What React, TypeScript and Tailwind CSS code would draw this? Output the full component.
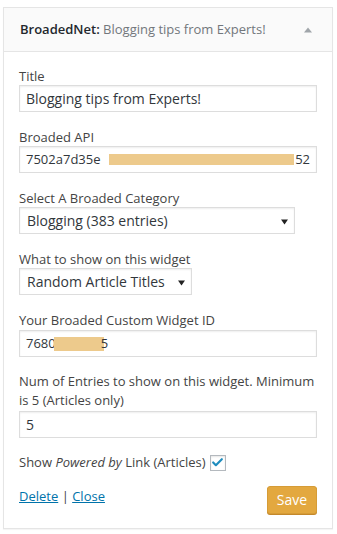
import { Check } from 'lucide-react';

function Field({ label, children }: { label: React.ReactNode; children: React.ReactNode }) {
  return (
    <div className="mt-4 first:mt-0">
      <label className="block text-[13px] leading-[18px] text-[#444]">{label}</label>
      {children}
    </div>
  );
}

function TextBox({ children, size = 'text-[14px]' }: { children: React.ReactNode; size?: string }) {
  return (
    <div
      className={`flex h-[27px] items-center whitespace-nowrap overflow-hidden border border-[#ddd] bg-white px-[6px] text-[#32373c] shadow-[inset_0_1px_2px_rgba(0,0,0,0.07)] ${size}`}
    >
      {children}
    </div>
  );
}

function SelectBox({ value, width }: { value: string; width: string }) {
  return (
    <div
      className={`flex h-[27px] items-center justify-between border border-[#ddd] bg-white pl-[7px] pr-[6px] text-[14px] text-[#32373c] shadow-[inset_0_1px_2px_rgba(0,0,0,0.07)] ${width}`}
    >
      <span>{value}</span>
      <svg width="7" height="7" viewBox="0 0 7 7" className="mt-[1px]">
        <path d="M0 1.5h7L3.5 6.5z" fill="#222" />
      </svg>
    </div>
  );
}

export default function App() {
  return (
    <div className="min-h-[534px] bg-white pt-[7px] pl-[3px] pr-[4px] font-['Open_Sans',sans-serif]">
      <div className="border border-[#e5e5e5] bg-white shadow-[0_1px_1px_rgba(0,0,0,0.04)]">
        <div className="flex h-[44px] items-center justify-between border-b border-[#e5e5e5] bg-[#fafafa] pl-[16px] pr-[20px]">
          <h3 className="text-[13px] text-[#23282d]">
            <span className="font-semibold">BroadedNet:</span>{' '}
            <span className="text-[#72777c]">Blogging tips from Experts!</span>
          </h3>
          <svg width="8" height="6" viewBox="0 0 8 6">
            <path d="M4 0.5L8 5.5H0z" fill="#a0a5aa" />
          </svg>
        </div>

        <div className="px-[15px] pt-[15px] pb-[14px]">
          <Field label="Title">
            <TextBox>Blogging tips from Experts!</TextBox>
          </Field>

          <Field label="Broaded API">
            <TextBox size="text-[13px]">
              <span>7502a7d35e</span>
              <span className="ml-[8px] inline-block h-[11px] w-[190px] bg-[#edca8c]" />
              <span className="ml-[1px]">52</span>
            </TextBox>
          </Field>

          <Field label="Select A Broaded Category">
            <SelectBox value="Blogging (383 entries)" width="w-[276px]" />
          </Field>

          <Field label="What to show on this widget">
            <SelectBox value="Random Article Titles" width="w-[173px]" />
          </Field>

          <Field label="Your Broaded Custom Widget ID">
            <div className="mt-[1px]">
              <TextBox size="text-[13px]">
                <span>7680</span>
                <span className="-ml-[2px] inline-block h-[14px] w-[50px] bg-[#edca8c]" />
                <span className="-ml-[3px]">5</span>
              </TextBox>
            </div>
          </Field>

          <div className="mt-[15px]">
            <label className="block text-[13px] leading-[19px] text-[#444]">
              Num of Entries to show on this widget. Minimum is 5 (Articles only)
            </label>
            <div className="mt-[1px]">
              <TextBox>5</TextBox>
            </div>
          </div>

          <div className="mt-[15px] flex items-center gap-[4px] text-[13px] text-[#444]">
            <span>
              Show <em>Powered by</em> Link (Articles)
            </span>
            <span className="flex h-[16px] w-[16px] items-center justify-center border border-[#b4b9be] bg-white shadow-[inset_0_1px_2px_rgba(0,0,0,0.1)]">
              <Check size={13} strokeWidth={4} className="text-[#1e8cbe]" />
            </span>
          </div>

          <div className="mt-[13px] flex items-start justify-between">
            <div className="mt-[1px] text-[13px] text-[#444]">
              <a className="text-[#0073aa] underline">Delete</a> | <a className="text-[#0073aa] underline">Close</a>
            </div>
            <button className="h-[28px] w-[50px] rounded-[3px] border border-[#d69c37] bg-[#e3a83f] text-[14px] text-white shadow-[0_1px_0_#c4882b]">
              Save
            </button>
          </div>
        </div>
      </div>
    </div>
  );
}
